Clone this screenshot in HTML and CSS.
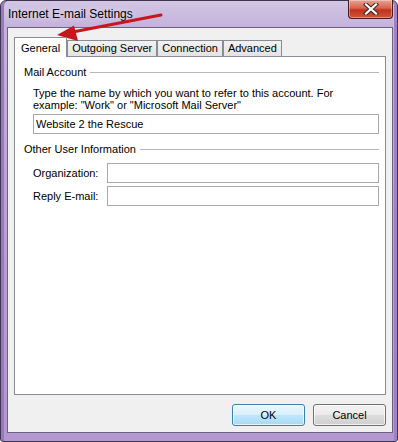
FILE: index.html
```html
<!DOCTYPE html>
<html lang="en">
<head>
    <meta charset="UTF-8">
    <title>Internet E-mail Settings</title>
    <link rel="stylesheet" href="styles.css">
</head>
<body>

<div class="window">
    <div class="titlebar">
        <span class="title">Internet E-mail Settings</span>
        <button class="close-btn" aria-label="Close">
            <svg width="16" height="12" viewBox="0 0 16 12">
                <path d="M3 1.5 L13 10.5 M13 1.5 L3 10.5" stroke="#3b2a2a" stroke-width="4.2" stroke-linecap="square"/>
                <path d="M3 1.5 L13 10.5 M13 1.5 L3 10.5" stroke="#fff" stroke-width="2.2" stroke-linecap="square"/>
            </svg>
        </button>
    </div>

    <div class="client">
        <!-- Tab strip -->
        <div class="tabs">
            <div class="tab active">General</div>
            <div class="tab">Outgoing Server</div>
            <div class="tab">Connection</div>
            <div class="tab">Advanced</div>
        </div>

        <div class="panel">
            <div class="group-title">Mail Account</div>
            <div class="group-body">
                <p class="hint">Type the name by which you want to refer to this account. For<br>example: "Work" or "Microsoft Mail Server"</p>
                <input class="field" type="text" value="Website 2 the Rescue">
            </div>

            <div class="group-title">Other User Information</div>
            <div class="group-body form-grid">
                <label for="org">Organization:</label>
                <input class="field" id="org" type="text">
                <label for="reply">Reply E-mail:</label>
                <input class="field" id="reply" type="text">
            </div>
        </div>

        <div class="buttons">
            <button class="btn default">OK</button>
            <button class="btn">Cancel</button>
        </div>
    </div>

    <!-- red pointer drawn over the dialog -->
    <svg class="arrow" width="398" height="442" viewBox="0 0 398 442">
        <line x1="161" y1="15" x2="70" y2="32.5" stroke="#c8161d" stroke-width="3" stroke-linecap="round"/>
        <polygon points="57,35 74,25.5 78,41" fill="#c8161d"/>
    </svg>
</div>

</body>
</html>
```

FILE: styles.css
```css
body {
    margin: 0;
    background: #fff;
    font-family: "Liberation Sans", Arial, sans-serif;
    font-size: 11px;
    color: #000;
}
.window {
    position: relative;
    width: 398px;
    height: 442px;
    box-sizing: border-box;
    border: 1px solid #3e3550;
    border-radius: 6px 6px 3px 3px;
    background: linear-gradient(to bottom, #d3c6e4 0, #c4b2dc 26px, #b89dd3 60%, #b497d1 100%);
    box-shadow: inset 3px 0 0 #9878c0, inset -3px 0 0 #9f82c4;
    padding: 0 4px 8px 6px;
    display: flex;
    flex-direction: column;
}
.titlebar {
    height: 26px;
    display: flex;
    justify-content: space-between;
    align-items: flex-start;
    padding-left: 1px;
}
.title {
    font-size: 12px;
    line-height: 26px;
    text-shadow: 0 0 6px rgba(255, 255, 255, 0.8);
}
.close-btn {
    width: 45px;
    height: 19px;
    margin-top: -1px;
    padding: 0;
    border: 1px solid #4a1c1a;
    border-top: none;
    border-radius: 0 0 4px 4px;
    background: linear-gradient(to bottom, #e8a393 0, #d7634d 45%, #c2321c 55%, #d1543a 100%);
    box-shadow: inset 0 0 0 1px rgba(255, 255, 255, 0.35);
    display: flex;
    align-items: center;
    justify-content: center;
}
.client {
    flex: 1;
    background: #f0f0f0;
    border: 1px solid #6b6480;
    padding: 9px 6px 6px 6px;
    display: flex;
    flex-direction: column;
}
.tabs {
    display: flex;
    align-items: flex-end;
    height: 19px;
}
.tab {
    height: 16px;
    line-height: 15px;
    padding: 0 4px;
    box-sizing: border-box;
    border: 1px solid #898c95;
    border-bottom: none;
    background: linear-gradient(to bottom, #f2f2f2, #e3e3e3);
}
.tab.active {
    position: relative;
    z-index: 1;
    height: 20px;
    line-height: 21px;
    margin-bottom: -1px;
    padding: 0 6px;
    background: #fff;
}
.panel {
    flex: 1;
    background: #fff;
    border: 1px solid #898c95;
    padding: 0 6px 0 9px;
}
.group-title {
    display: flex;
    align-items: center;
    gap: 4px;
    line-height: 13px;
    margin-top: 9px;
}
.group-title::after {
    content: "";
    flex: 1;
    border-top: 1px solid #b8b8b8;
}
.group-body {
    padding-left: 9px;
}
.hint {
    margin: 8px 0 3px;
    line-height: 12px;
}
.field {
    display: block;
    width: 100%;
    height: 20px;
    box-sizing: border-box;
    border: 1px solid #a9a9a9;
    padding: 0 2px;
    font-family: inherit;
    font-size: 11px;
    color: #000;
}
.form-grid {
    display: grid;
    grid-template-columns: 74px 1fr;
    row-gap: 3px;
    align-items: center;
    margin-top: 7px;
}
.buttons {
    display: flex;
    justify-content: flex-end;
    gap: 8px;
    margin-top: 9px;
}
.btn {
    width: 73px;
    height: 22px;
    border: 1px solid #707070;
    border-radius: 3px;
    background: linear-gradient(to bottom, #f2f2f2 0, #ebebeb 50%, #dddddd 51%, #cfcfcf 100%);
    box-shadow: inset 0 0 0 1px rgba(255, 255, 255, 0.7);
    font-family: inherit;
    font-size: 11px;
    color: #000;
}
.btn.default {
    border-color: #3c7fb1;
    background: linear-gradient(to bottom, #eaf6fd 0, #d9f0fc 50%, #bee6fd 51%, #a7d9f5 100%);
}
.arrow {
    position: absolute;
    left: -1px;
    top: -1px;
    pointer-events: none;
}
```
